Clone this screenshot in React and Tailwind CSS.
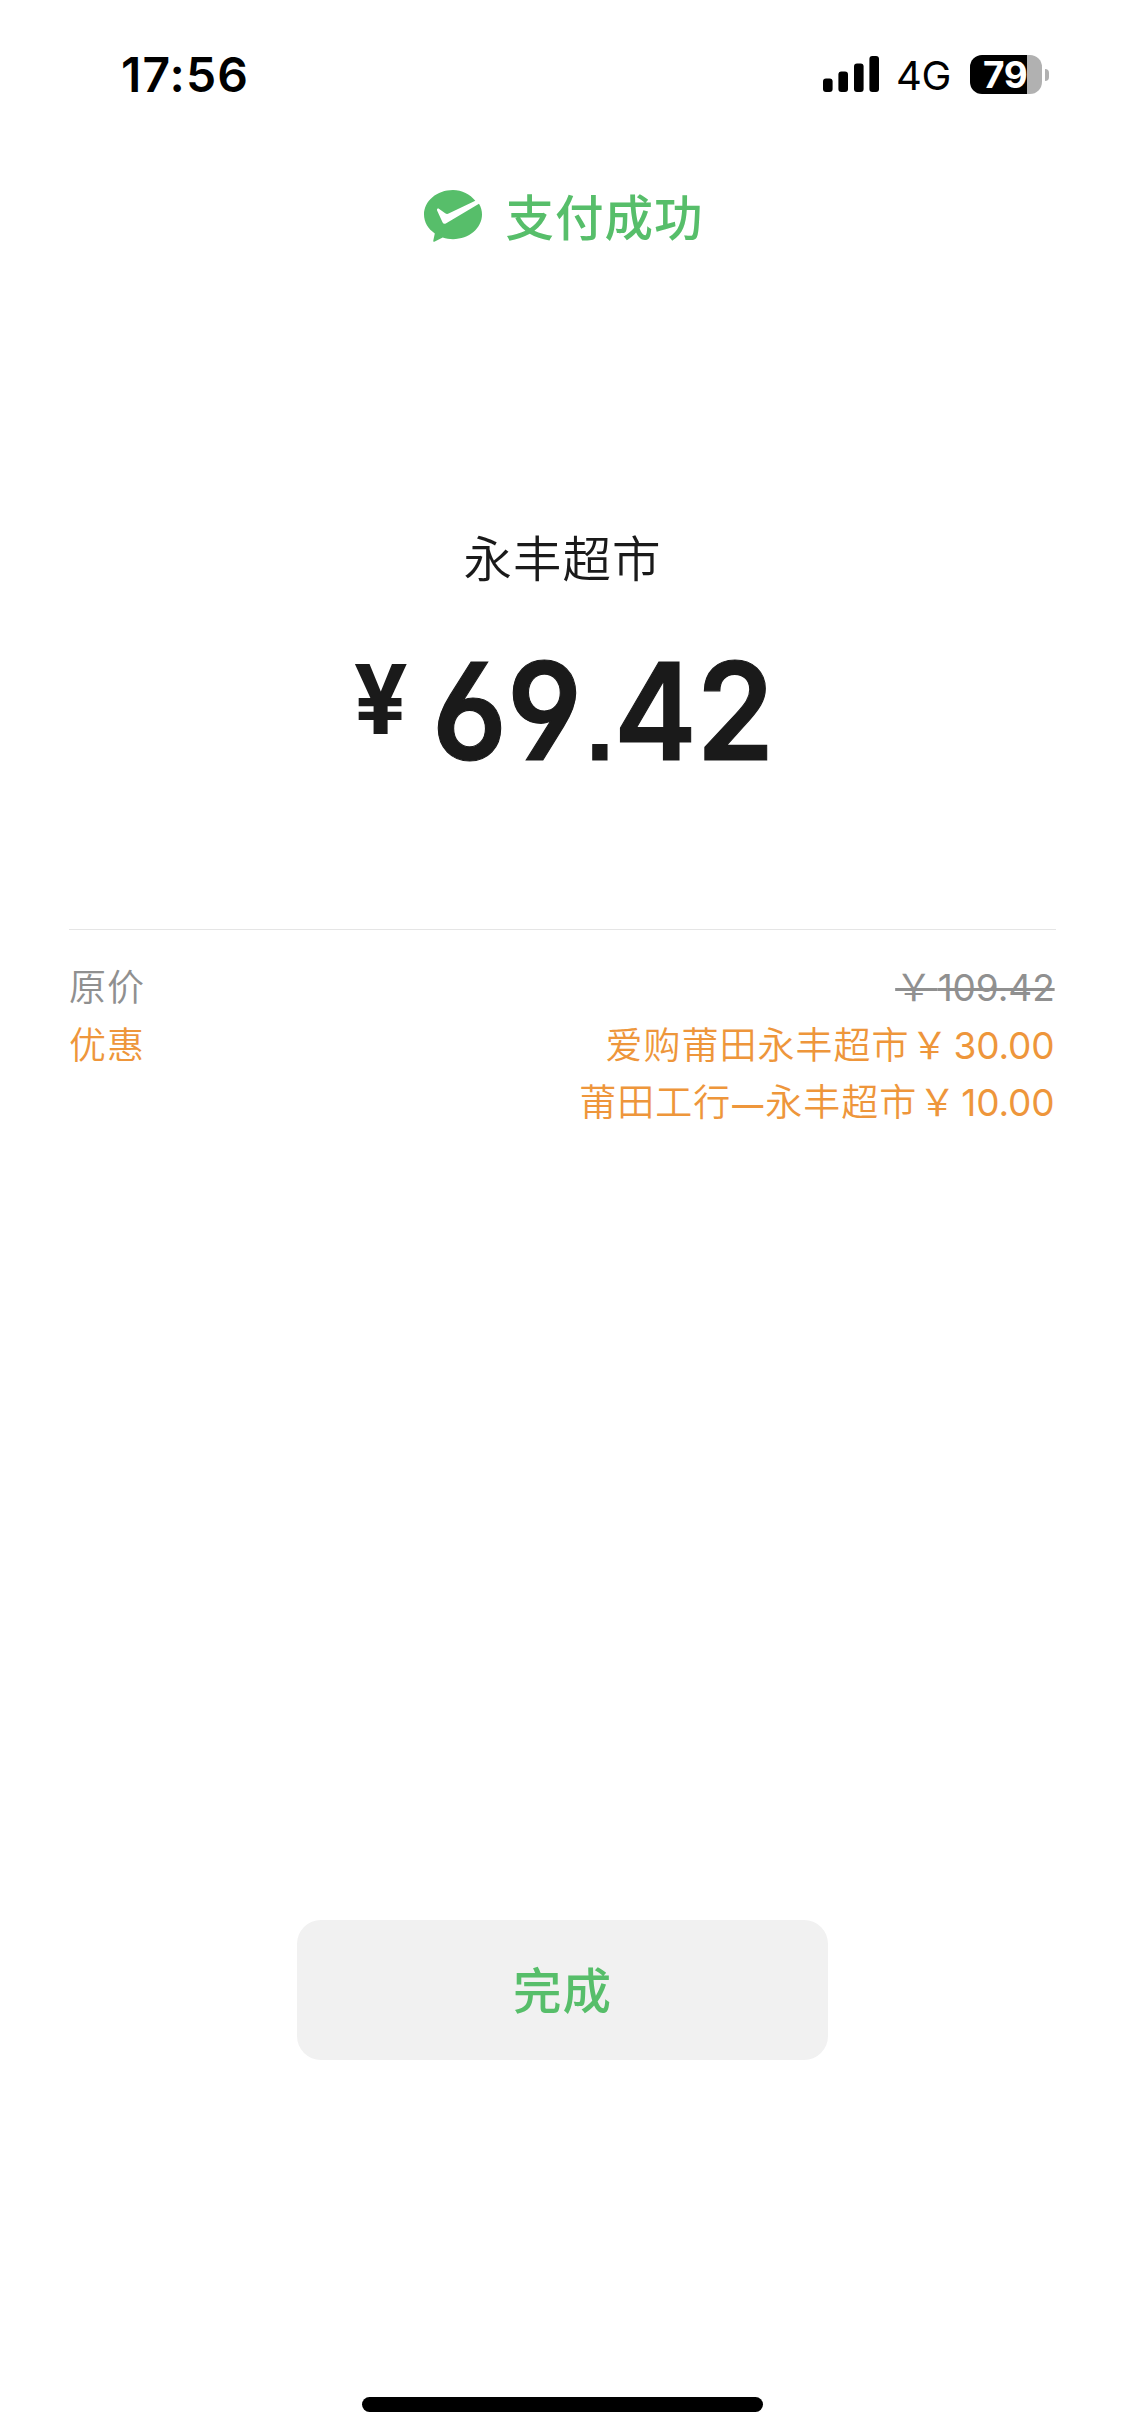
const FONT = "font-['Inter','Noto_Sans_CJK_SC',sans-serif]";

function StatusBar() {
  return (
    <header className="flex h-[150px] shrink-0 items-start justify-between pl-[121px] pr-[76px] text-black">
      <time className="mt-[45px] text-[48px] leading-[60px] font-semibold tracking-[1.1px]">17:56</time>
      <div className="mt-[55px] flex h-[39px] items-center">
        <svg className="mt-[-1px] h-9 w-14" viewBox="0 0 56 36" fill="currentColor">
          <rect x="0" y="22.5" width="9.6" height="13.5" rx="3" />
          <rect x="15.4" y="15.5" width="9.6" height="20.5" rx="3" />
          <rect x="31" y="7.5" width="9.6" height="28.5" rx="3" />
          <rect x="46.4" y="0" width="9.6" height="36" rx="3" />
        </svg>
        <span className="mt-[2px] ml-[17px] w-[74px] whitespace-nowrap text-[40px] leading-[39px] tracking-[-0.3px]">4G</span>
        <div className="flex h-[39px] w-[72px] items-center rounded-[12px] bg-[linear-gradient(to_right,#000_57px,#b1b1b1_57px)] pl-[13px]">
          <span className="text-[37px] leading-[39px] font-bold tracking-[-0.5px] text-white">79</span>
        </div>
        <div className="ml-[3px] h-3 w-1 rounded-r-full bg-[#b1b1b1]" />
      </div>
    </header>
  );
}

function PaidIcon() {
  return (
    <svg className="mt-[-2px] h-[52px] w-[58px]" viewBox="0 0 58 52">
      <path fill="#57be6a" d="M29 0C13 0 0 11 0 24.600C0 32.300 4.200 39 10.800 43.500L9.300 50.600Q9.100 52.400 10.800 51.600L18.700 47.500C22 48.700 25.400 49.200 29 49.200C45 49.200 58 38.200 58 24.600C58 20.700 57 17 55 13.800L21.800 33.400Q19.600 34.500 18.500 32.200L13.100 20.400C12.600 19 14 18 15.200 18.900L21.200 23.300Q22.800 24.300 24.600 23.600L51.300 10.800C46 4.200 38 0 29 0Z" />
    </svg>
  );
}

function Money({ children }) {
  return (
    <span className="pr-[1.4px] font-normal tracking-[-0.1px]"><span className="ml-[1.5px] tracking-[5.5px]">￥</span>{children}</span>
  );
}

export default function App() {
  return (
    <main className={`flex h-[2435px] w-[1125px] flex-col bg-white ${FONT}`}>
      <StatusBar />
      <div className="mt-[37px] flex h-[60px] shrink-0 items-center justify-center gap-[23px] pl-[3px] text-[#57be6a]">
        <PaidIcon />
        <h1 className="mt-[3px] text-[48.5px] leading-[60px] font-medium tracking-[1px]">支付成功</h1>
      </div>

      <section className="mt-[283px] flex h-[399px] shrink-0 flex-col items-center text-[#1a1a1a]">
        <h2 className="text-[48.5px] leading-[60px] font-[350] tracking-[1px]">永丰超市</h2>
        <div className="mt-[61px] flex w-[418px] items-start">
          <span className="w-[58px] text-[95.6px] leading-[96px] font-bold">¥</span>
          <span className="mt-[-8px] ml-[20px] w-[340px] origin-left scale-x-[0.92] text-[135px] leading-[136px] font-semibold [-webkit-text-stroke:1.2px_#1a1a1a] [font-kerning:none] [font-feature-settings:'cv03','cv04','ss07']">69<span className="font-normal tracking-[-4px]">.</span>42</span>
        </div>
      </section>

      <section className="mx-[69px] shrink-0 border-t border-[#e5e5e5] pt-[29px] text-[37px] leading-[57.7px] font-[350] tracking-[1px]">
        <div className="flex justify-between text-[#909090]">
          <span>原价</span>
          <span className="line-through decoration-[3px]"><Money>109.42</Money></span>
        </div>
        <div className="flex justify-between text-[#ee963b]">
          <span>优惠</span>
          <div className="text-right">
            <p>爱购莆田永丰超市<Money>30.00</Money></p>
            <p>莆田工行<span className="ml-px mr-px text-[31px] font-medium">—</span>永丰超市<Money>10.00</Money></p>
          </div>
        </div>
      </section>

      <button className="mx-auto mt-auto h-[140px] w-[531px] shrink-0 rounded-[24px] bg-[#f1f1f1] pt-[5px] text-[48.5px] font-medium tracking-[1px] text-[#57be6a]">完成</button>
      <div className="mx-auto mt-[337px] mb-[23px] h-[15px] w-[401px] shrink-0 rounded-full bg-black" />
    </main>
  );
}
